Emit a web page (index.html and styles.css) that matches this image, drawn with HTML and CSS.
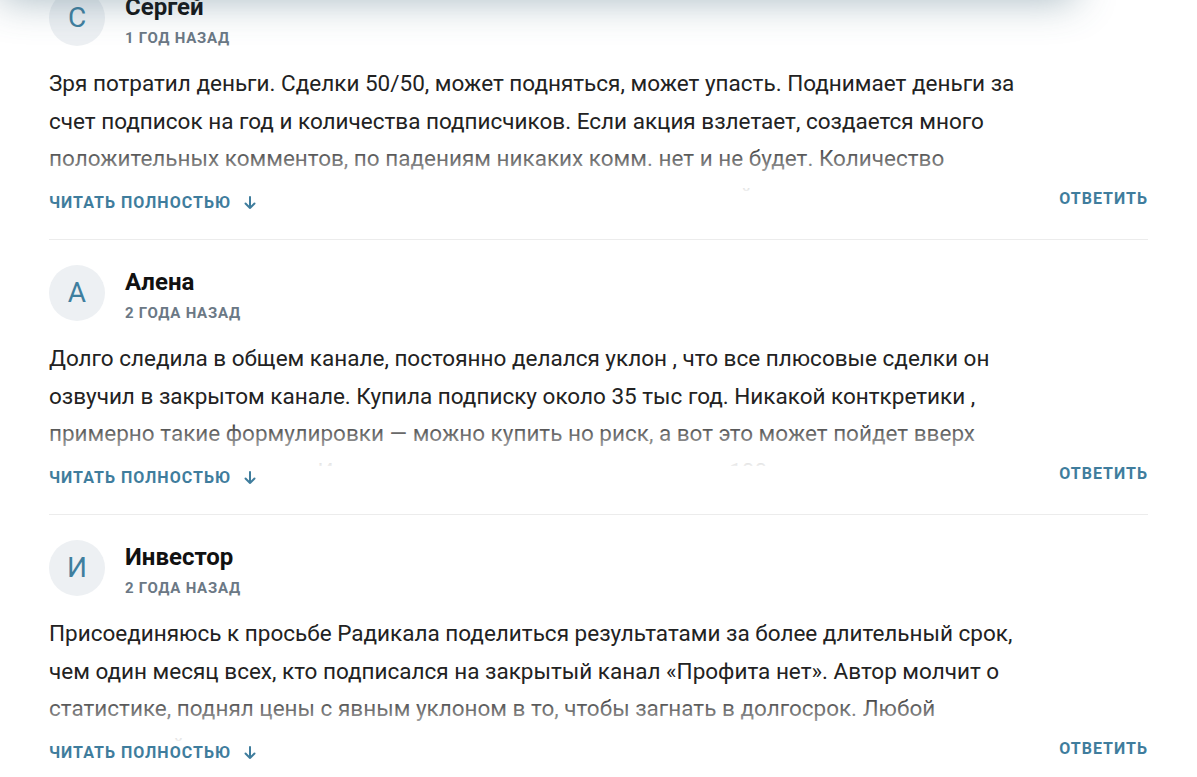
FILE: index.html
```html
<!DOCTYPE html>
<html lang="ru">
<head>
<meta charset="utf-8">
<title>Комментарии</title>
<link rel="stylesheet" href="styles.css">
</head>
<body>
<div class="topbar"></div>
<main class="comments">
  <article class="comment">
    <header class="comment-head">
      <div class="avatar">С</div>
      <div class="meta">
        <div class="name">Сергей</div>
        <div class="date">1 год назад</div>
      </div>
    </header>
    <div class="text">
      <p>Зря потратил деньги. Сделки 50/50, может подняться, может упасть. Поднимает деньги за счет подписок на год и количества подписчиков. Если акция взлетает, создается много положительных комментов, по падениям никаких комм. нет и не будет. Количество подписчиков растет за счет рекламы, а результат сделок никакой и никто не считает.</p>
    </div>
    <footer class="actions">
      <button class="more">Читать полностью
        <svg class="arrow" viewBox="0 0 12 14" width="12" height="14"><path d="M6 1v11M1.5 7.5 6 12l4.5-4.5"/></svg>
      </button>
      <button class="reply">Ответить</button>
    </footer>
  </article>

  <article class="comment">
    <header class="comment-head">
      <div class="avatar">А</div>
      <div class="meta">
        <div class="name">Алена</div>
        <div class="date">2 года назад</div>
      </div>
    </header>
    <div class="text">
      <p>Долго следила в общем канале, постоянно делался уклон , что все плюсовые сделки он озвучил в закрытом канале. Купила подписку около 35 тыс год. Никакой конткретики , примерно такие формулировки — можно купить но риск, а вот это может пойдет вверх наверное, а может и нет. И в итоге у меня из всех сделок около 100 процентов в минусе.</p>
    </div>
    <footer class="actions">
      <button class="more">Читать полностью
        <svg class="arrow" viewBox="0 0 12 14" width="12" height="14"><path d="M6 1v11M1.5 7.5 6 12l4.5-4.5"/></svg>
      </button>
      <button class="reply">Ответить</button>
    </footer>
  </article>

  <article class="comment">
    <header class="comment-head">
      <div class="avatar">И</div>
      <div class="meta">
        <div class="name">Инвестор</div>
        <div class="date">2 года назад</div>
      </div>
    </header>
    <div class="text">
      <p>Присоединяюсь к просьбе Радикала поделиться результатами за более длительный срок, чем один месяц всех, кто подписался на закрытый канал «Профита нет». Автор молчит о статистике, поднял цены с явным уклоном в то, чтобы загнать в долгосрок. Любой нормальный аналитик показывает результаты сделок, а здесь ничего нет.</p>
    </div>
    <footer class="actions">
      <button class="more">Читать полностью
        <svg class="arrow" viewBox="0 0 12 14" width="12" height="14"><path d="M6 1v11M1.5 7.5 6 12l4.5-4.5"/></svg>
      </button>
      <button class="reply">Ответить</button>
    </footer>
  </article>
</main>
</body>
</html>
```

FILE: styles.css
```css
* { box-sizing: border-box; }

html, body {
  margin: 0;
  padding: 0;
  background: #fff;
  font-family: Roboto, "Noto Sans", Arial, sans-serif;
  color: #222;
}

.topbar {
  position: fixed;
  top: -100px;
  left: 0;
  width: 1075px;
  height: 100px;
  background: #fff;
  box-shadow: 0 0 40px rgba(60, 100, 120, 0.45);
  z-index: 5;
}

.comments {
  margin-top: -35px;
  padding: 0 49px;
}

.comment {
  padding: 25px 0 26px;
  border-bottom: 1px solid #ececec;
}

.comment-head {
  display: flex;
  align-items: flex-start;
  gap: 20px;
}

.avatar {
  width: 56px;
  height: 56px;
  flex: 0 0 56px;
  border-radius: 50%;
  background: #edf0f3;
  color: #3f7f9f;
  font-size: 28px;
  display: flex;
  align-items: center;
  justify-content: center;
  line-height: 1;
}

.meta {
  padding-top: 3px;
  display: flex;
  flex-direction: column;
  gap: 7px;
}

.name {
  font-size: 24px;
  line-height: 28px;
  font-weight: 700;
  color: #111;
}

.date {
  font-size: 15px;
  line-height: 20px;
  font-weight: 700;
  letter-spacing: 0.75px;
  text-transform: uppercase;
  color: #6b7885;
}

.text {
  position: relative;
  margin-top: 17px;
  max-width: 1000px;
  height: 126px;
  overflow: hidden;
}

.text p {
  margin: 0;
  font-size: 22.5px;
  line-height: 37.5px;
  color: #222;
}

.text::after {
  content: "";
  position: absolute;
  left: 0;
  right: 0;
  top: 76px;
  bottom: 0;
  background: linear-gradient(to bottom, rgba(255, 255, 255, 0), rgba(255, 255, 255, 0.93));
}

.actions {
  margin-top: 2px;
  display: flex;
  justify-content: space-between;
  align-items: flex-start;
}

.more, .reply {
  border: 0;
  background: none;
  padding: 0;
  margin: 0;
  font-family: inherit;
  font-weight: 700;
  font-size: 16px;
  line-height: 20px;
  letter-spacing: 1px;
  text-transform: uppercase;
  color: #3f7d9d;
  cursor: pointer;
}

.more {
  display: flex;
  align-items: center;
  gap: 13px;
}

.arrow {
  fill: none;
  stroke: #3f7d9d;
  stroke-width: 2;
  stroke-linecap: round;
  stroke-linejoin: round;
}

.reply {
  margin-top: -4px;
}
```
